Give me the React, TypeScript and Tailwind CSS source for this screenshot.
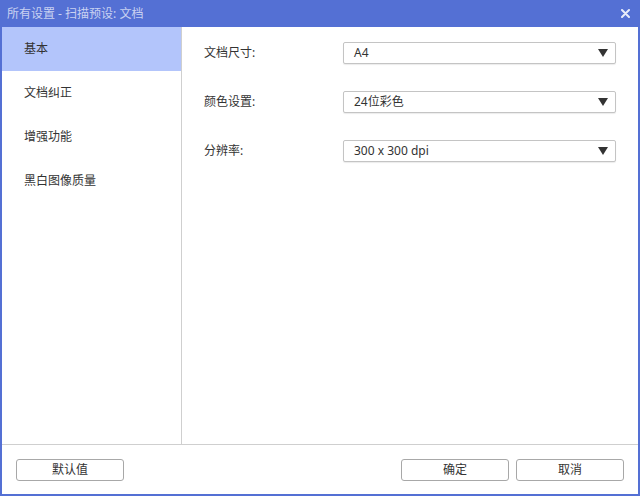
import React from "react";

const font = { fontFamily: '"Noto Sans", "Noto Sans CJK SC", sans-serif' };

function Select({ value }: { value: string }) {
  return (
    <div className="flex h-[22px] w-[273px] items-center justify-between rounded-[2px] border border-[#c4c4c4] bg-white pl-[10px] pr-[7px] shadow-[0_1px_1px_rgba(0,0,0,0.08)]">
      <span className="text-[12px] text-[#333]">{value}</span>
      <svg width="10" height="8" viewBox="0 0 10 8">
        <path d="M0 0 H10 L5 8 Z" fill="#333" />
      </svg>
    </div>
  );
}

function Btn({ label, w }: { label: string; w: string }) {
  return (
    <div
      className={`flex h-[22px] ${w} items-center justify-center rounded-[3px] border border-[#a8a8a8] bg-white text-[12px] text-[#333]`}
    >
      {label}
    </div>
  );
}

export default function App() {
  const items = ["基本", "文档纠正", "增强功能", "黑白图像质量"];
  const rows: [string, string][] = [
    ["文档尺寸:", "A4"],
    ["颜色设置:", "24位彩色"],
    ["分辨率:", "300 x 300 dpi"],
  ];
  return (
    <div style={font} className="flex h-[496px] w-[640px] flex-col bg-[#5470d4]">
      <div className="flex h-[27px] shrink-0 items-center justify-between pl-[7px] pr-[10px]">
        <span className="text-[12px] text-white/70">所有设置 - 扫描预设: 文档</span>
        <svg width="9" height="9" viewBox="0 0 9 9">
          <path d="M1 1 L8 8 M8 1 L1 8" stroke="#e8ecfa" strokeWidth="2" strokeLinecap="round" />
        </svg>
      </div>
      <div className="mx-[2px] mb-[2px] flex flex-1 flex-col bg-white">
        <div className="flex flex-1">
          <div className="flex w-[180px] flex-col border-r border-[#cfcfcf]">
            {items.map((t, i) => (
              <div
                key={t}
                className={`flex h-[44px] items-center pl-[22px] text-[12px] text-[#333] ${
                  i === 0 ? "bg-[#b3c5fb]" : ""
                }`}
              >
                {t}
              </div>
            ))}
          </div>
          <div className="flex flex-1 flex-col gap-[27px] pt-[15px]">
            {rows.map(([l, v]) => (
              <div key={l} className="flex items-center">
                <span className="w-[161px] pl-[22px] text-[12px] text-[#333]">{l}</span>
                <Select value={v} />
              </div>
            ))}
          </div>
        </div>
        <div className="flex h-[50px] shrink-0 items-center border-t border-[#cfcfcf] pl-[14px] pr-[14px]">
          <Btn label="默认值" w="w-[108px]" />
          <div className="flex-1" />
          <div className="flex gap-[7px]">
            <Btn label="确定" w="w-[108px]" />
            <Btn label="取消" w="w-[108px]" />
          </div>
        </div>
      </div>
    </div>
  );
}
